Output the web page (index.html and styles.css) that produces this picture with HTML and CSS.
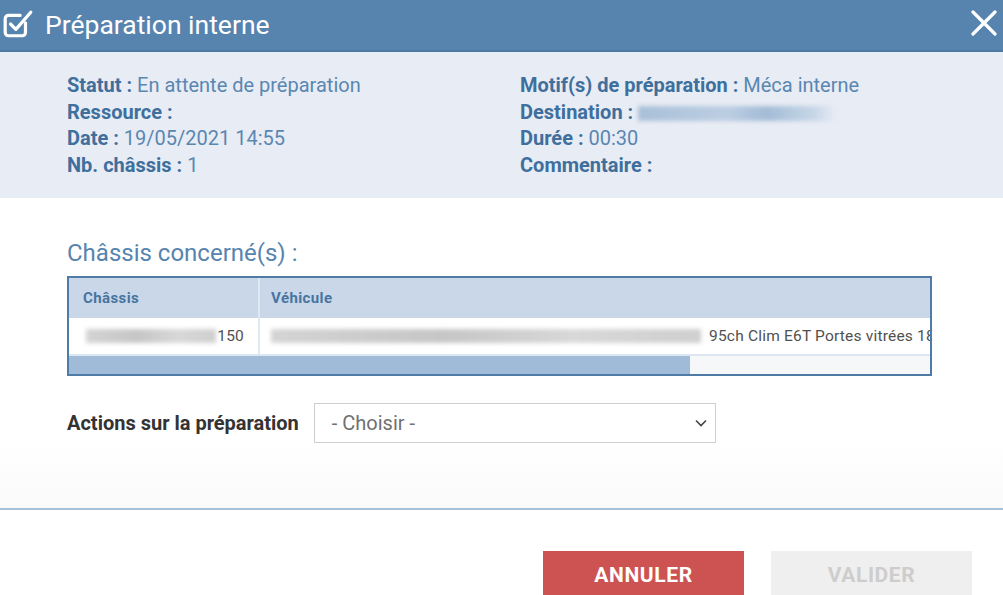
FILE: index.html
```html
<!DOCTYPE html>
<html lang="fr">
<head>
<meta charset="utf-8">
<title>Préparation interne</title>
<link rel="stylesheet" href="styles.css">
</head>
<body>
<div class="dialog">
  <header class="head">
    <div class="head-title">
      <svg class="head-icon" width="32" height="32" viewBox="0 0 30 30" fill="none" stroke="#fff" stroke-width="3" stroke-linecap="round" stroke-linejoin="round">
        <path d="M22 14v9a3 3 0 0 1-3 3H6a3 3 0 0 1-3-3V10a3 3 0 0 1 3-3h11"/>
        <path d="M8 15l5 5L27 4"/>
      </svg>
      <span>Préparation interne</span>
    </div>
    <svg class="close" width="26" height="26" viewBox="0 0 26 26" stroke="#fff" stroke-width="3.2" stroke-linecap="round">
      <path d="M2 2l22 22M24 2L2 24"/>
    </svg>
  </header>

  <section class="info">
    <div class="info-col">
      <div><b>Statut :</b> En attente de préparation</div>
      <div><b>Ressource :</b></div>
      <div><b>Date :</b> 19/05/2021 14:55</div>
      <div><b>Nb. châssis :</b> 1</div>
    </div>
    <div class="info-col">
      <div><b>Motif(s) de préparation :</b> Méca interne</div>
      <div><b>Destination :</b> <span class="redact redact-blue"></span></div>
      <div><b>Durée :</b> 00:30</div>
      <div><b>Commentaire :</b></div>
    </div>
  </section>

  <section class="content">
    <h2 class="section-title">Châssis concerné(s) :</h2>
    <div class="table">
      <div class="row row-head">
        <div class="cell c1">Châssis</div>
        <div class="cell c2">Véhicule</div>
      </div>
      <div class="row row-data">
        <div class="cell c1"><span class="redact redact-grey r1"></span>150</div>
        <div class="cell c2"><span class="redact redact-grey r2"></span>95ch Clim E6T Portes vitrées 18</div>
      </div>
      <div class="scrollbar"><div class="thumb"></div></div>
    </div>

    <div class="actions">
      <label class="actions-label">Actions sur la préparation</label>
      <div class="select">
        <span>- Choisir -</span>
        <svg width="12" height="8" viewBox="0 0 12 8" fill="none" stroke="#444" stroke-width="1.6"><path d="M1 1.5l5 5 5-5"/></svg>
      </div>
    </div>
  </section>

  <footer class="foot">
    <button class="btn btn-cancel">Annuler</button>
    <button class="btn btn-ok">Valider</button>
  </footer>
</div>
</body>
</html>
```

FILE: styles.css
```css
* { box-sizing: border-box; }
html, body { margin: 0; padding: 0; }
body {
  width: 1003px;
  height: 595px;
  overflow: hidden;
  font-family: Roboto, "Liberation Sans", Arial, sans-serif;
  background: #fff;
}
.dialog { display: flex; flex-direction: column; width: 1003px; }

.head {
  height: 52px;
  background: #5784ae;
  border-bottom: 2px solid #4c79a2;
  display: flex;
  align-items: center;
  justify-content: space-between;
  padding: 0 6px 0 2px;
}
.head-title {
  display: flex;
  align-items: center;
  gap: 11px;
  color: #fff;
  font-size: 26.5px;
  margin-top: -2px;
}
.head-icon { display: block; }
.close { display: block; margin-top: -4px; }

.info {
  background: #e8ecf5;
  height: 146px;
  padding: 20px 0 0 67px;
  display: flex;
  font-size: 20px;
  line-height: 26.6px;
  color: #5a87b1;
}
.info-col { width: 453px; }
.info b { color: #3f6f9c; font-weight: 700; }

.redact {
  display: inline-block;
  vertical-align: middle;
  flex-shrink: 0;
  filter: blur(2px);
}
.redact-blue {
  width: 198px;
  height: 15px;
  background: linear-gradient(90deg, #a9c0d8 0%, #bccee2 45%, #a3bcd6 65%, #c9d8e8 90%, rgba(220,228,240,0) 100%);
}
.redact-grey { height: 14px; background: linear-gradient(90deg, #d4d4d4, #c6c6c6 40%, #d8d8d8 70%, #cfcfcf); }
.r1 { width: 130px; margin-right: 1px; }
.r2 { width: 430px; margin-right: 8px; }

.content {
  padding: 41px 71px 0 67px;
  height: 312px;
  background: linear-gradient(#fff 0, #fff 245px, #fafafa 312px);
  border-bottom: 2px solid #a7c1db;
}
.section-title {
  margin: 0 0 9px;
  font-weight: 400;
  font-size: 24px;
  line-height: 28px;
  color: #5784ae;
}
.table {
  border: 2px solid #4f7ca6;
  background: #fff;
  overflow: hidden;
}
.row { display: flex; white-space: nowrap; }
.row-head { height: 40px; background: #c9d7e9; color: #4775a0; font-weight: 700; font-size: 15px; letter-spacing: 0.4px; }
.row-data { height: 38px; border-bottom: 2px solid #dbe6f2; font-size: 15.5px; color: #505050; letter-spacing: 0.2px; }
.cell { display: flex; align-items: center; overflow: hidden; }
.c1 { width: 191px; flex-shrink: 0; padding-left: 14px; border-right: 2px solid #dfe8f3; }
.row-data .c1 { justify-content: flex-end; padding-right: 14px; padding-left: 0; }
.c2 { flex: 1; min-width: 0; padding-left: 11px; }
.scrollbar { height: 18px; background: #f6f7f9; }
.thumb { width: 621px; height: 100%; background: #a0bbd8; }

.actions {
  display: flex;
  align-items: center;
  gap: 15px;
  margin-top: 27px;
}
.actions-label { font-size: 20px; font-weight: 700; color: #333; }
.select {
  width: 402px;
  height: 40px;
  border: 1px solid #cfcfcf;
  background: #fff;
  display: flex;
  align-items: center;
  justify-content: space-between;
  padding: 0 8px 0 17px;
  font-size: 20px;
  color: #707070;
}

.foot {
  display: flex;
  justify-content: flex-end;
  gap: 27px;
  padding: 41px 31px 0 0;
}
.btn {
  width: 201px;
  height: 50px;
  border: 0;
  font-family: inherit;
  font-size: 21px;
  font-weight: 700;
  text-transform: uppercase;
  letter-spacing: 0.6px;
  padding: 0 0 2px;
}
.btn-cancel { background: #cd5252; color: #fff; }
.btn-ok { background: #efefef; color: #cdcdcd; }
```
